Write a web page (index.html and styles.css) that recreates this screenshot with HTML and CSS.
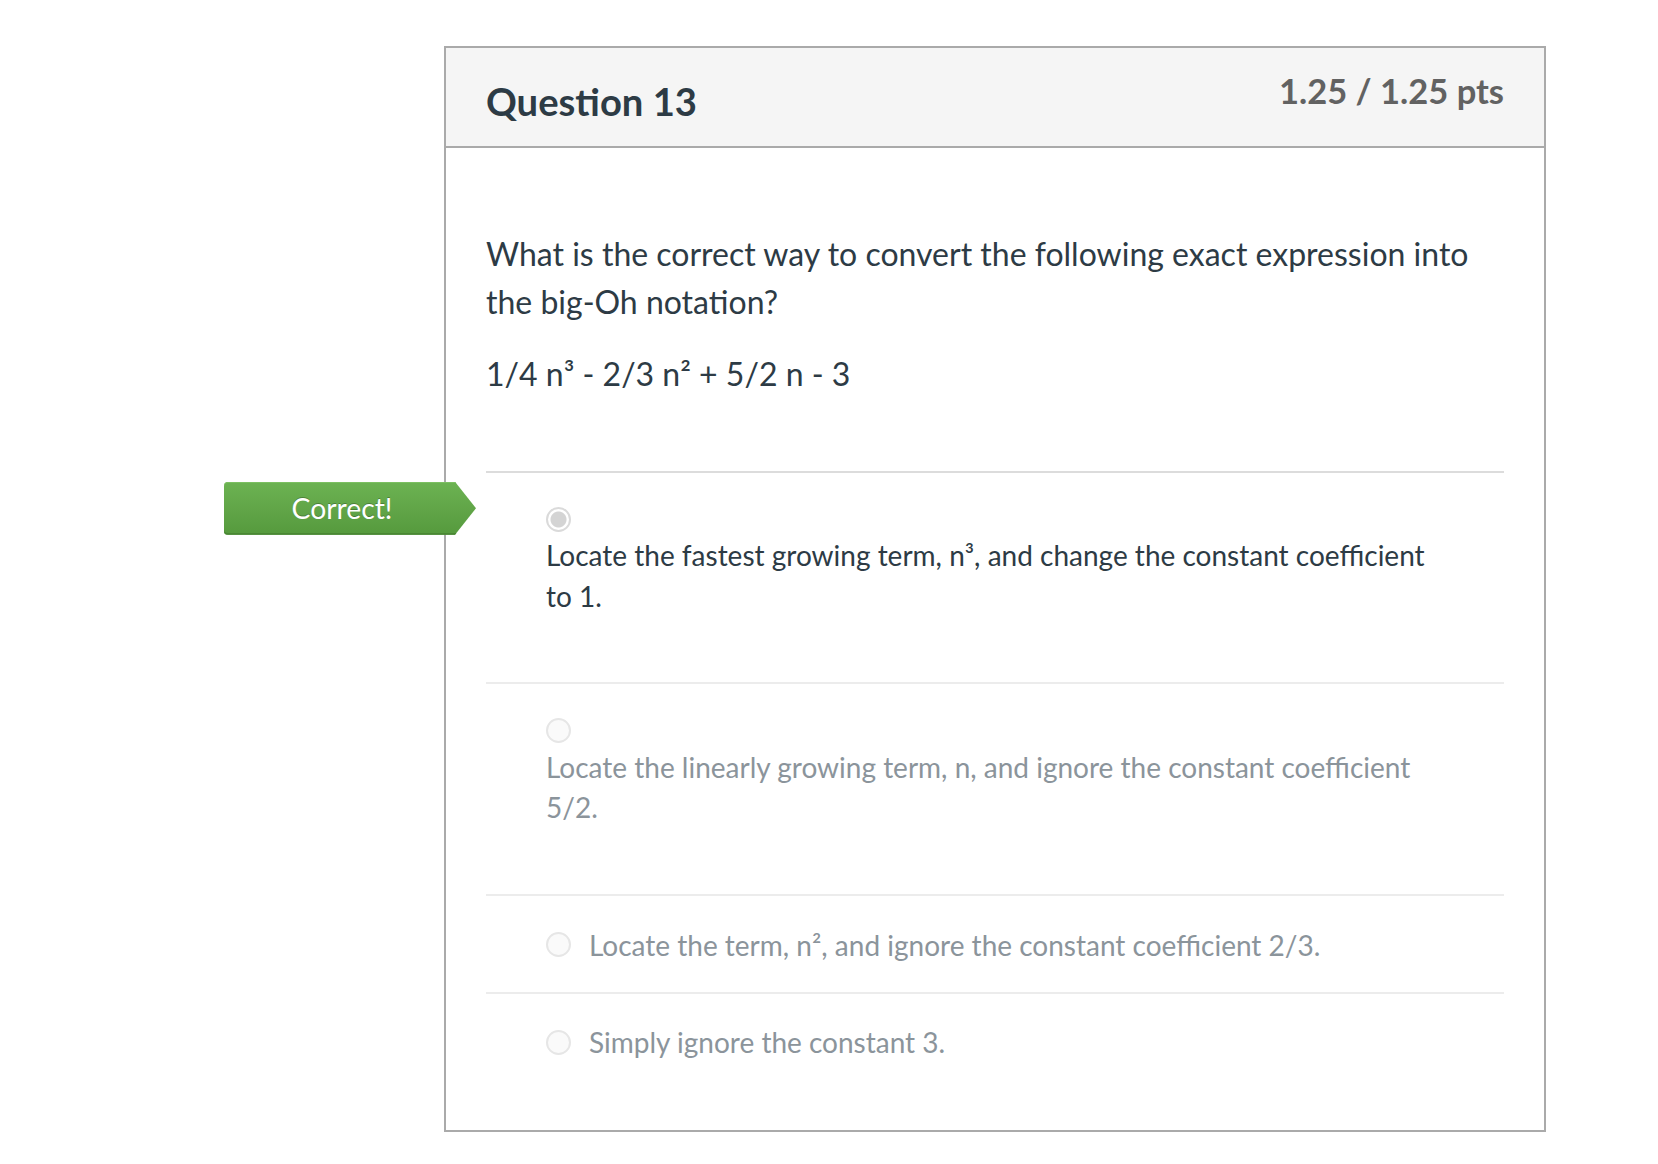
FILE: index.html
```html
<!DOCTYPE html>
<html lang="en">
<head>
<meta charset="utf-8">
<title>Question 13</title>
<link rel="stylesheet" href="styles.css">
</head>
<body>
<div class="page">
  <div class="question">
    <div class="q-header">
      <h2 class="q-title">Question 13</h2>
      <div class="q-points">1.25 / 1.25 pts</div>
    </div>
    <div class="q-body">
      <div class="q-text">
        <p>What is the correct way to convert the following exact expression into the big-Oh notation?</p>
        <p>1/4 n³ - 2/3 n² + 5/2 n - 3</p>
      </div>
      <div class="answers">
        <div class="answer answer--long answer--first">
          <span class="badge">Correct!</span>
          <span class="radio radio--checked"></span>
          <span class="answer-text answer-text--selected">Locate the fastest growing term, n³, and change the constant coefficient to 1.</span>
        </div>
        <div class="answer answer--long">
          <span class="radio"></span>
          <span class="answer-text">Locate the linearly growing term, n, and ignore the constant coefficient 5/2.</span>
        </div>
        <div class="answer">
          <span class="radio"></span>
          <span class="answer-text">Locate the term, n², and ignore the constant coefficient 2/3.</span>
        </div>
        <div class="answer">
          <span class="radio"></span>
          <span class="answer-text">Simply ignore the constant 3.</span>
        </div>
      </div>
    </div>
  </div>
</div>
</body>
</html>
```
FILE: styles.css
```css
* { box-sizing: border-box; }
html, body { margin: 0; padding: 0; background: #fff; }
body { font-family: Lato, "Noto Sans", sans-serif; color: #2d3b45; }

.page { padding: 46px 0 32px 444px; }

.question {
  width: 1102px;
  border: 2px solid #aaaaaa;
  background: #fff;
}

.q-header {
  height: 100px;
  background: #f5f5f5;
  border-bottom: 2px solid #aaaaaa;
  display: flex;
  justify-content: space-between;
  align-items: flex-start;
  padding: 0 40px;
}
.q-title {
  margin: 30.5px 0 0;
  font-size: 38.2px;
  font-weight: 700;
  line-height: 1.2;
  color: #2d3b45;
}
.q-points {
  margin-top: 21.6px;
  font-size: 34.5px;
  font-weight: 700;
  line-height: 1.2;
  color: #626262;
}

.q-body { padding: 0 40px 41px; }

.q-text {
  padding: 82.3px 0 72.4px;
  font-size: 32px;
  line-height: 48px;
}
.q-text p { margin: 0 0 24px; }
.q-text p:last-child { margin-bottom: 0; }

.answer {
  position: relative;
  display: flex;
  flex-wrap: wrap;
  align-items: center;
  padding: 28.5px 61px 26.5px 60px;
  border-top: 2px solid #ececec;
}
.answer--first { border-top-color: #dcdcdc; }
.answer--long { padding-top: 27.5px; padding-bottom: 66px; }

.radio {
  flex: none;
  width: 25px;
  height: 25px;
  border-radius: 50%;
  border: 2px solid #e6e6e6;
  background: #fafafa;
  margin-right: 18px;
}
.answer--long .radio { margin: 6.5px 18px 3.5px 0; }
.radio--checked {
  border-color: #dadada;
  background: radial-gradient(circle, #d4d4d4 0 7.5px, #ffffff 8.5px);
}

.answer-text {
  font-size: 28px;
  line-height: 1.45;
  color: #8b949b;
}
.answer-text--selected { color: #2d3b45; }

.badge {
  position: absolute;
  left: -262px;
  top: 9px;
  width: 252px;
  height: 53px;
  padding: 0 21px 0 5px;
  text-align: center;
  font-size: 28.3px;
  line-height: 53px;
  color: #fff;
  text-shadow: 0 -1px 0 rgba(0,0,0,0.25);
  background: linear-gradient(to bottom, #6cb352 0%, #5fa346 60%, #559a3d 100%);
  box-shadow: inset 0 -2px 0 #4a8734, inset 0 1px 0 #7cc062;
  border-radius: 4px;
  clip-path: polygon(0 0, calc(100% - 21px) 0, 100% 50%, calc(100% - 21px) 100%, 0 100%);
}
```
